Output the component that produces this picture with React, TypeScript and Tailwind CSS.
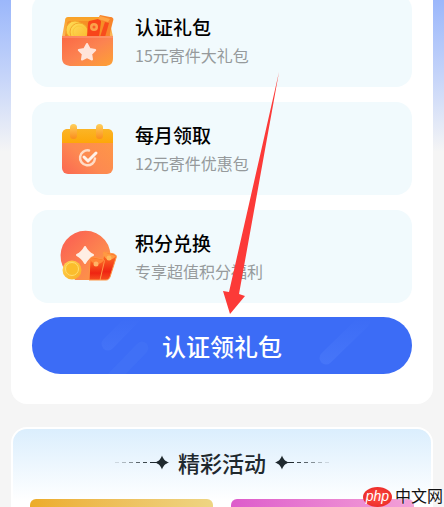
import type { ReactNode } from 'react';

function GiftBoxIcon() {
  return (
    <svg viewBox="0 -1 52 56" className="w-[52px] h-14" aria-hidden="true">
      <defs>
        <linearGradient id="boxBack" x1="0" y1="0" x2="0" y2="1">
          <stop offset="0" stopColor="#f9a126" />
          <stop offset="1" stopColor="#fbb65a" />
        </linearGradient>
        <linearGradient id="boxFront" x1="0" y1="0" x2="1" y2="1">
          <stop offset="0" stopColor="#fa6744" />
          <stop offset="0.5" stopColor="#fc8351" />
          <stop offset="1" stopColor="#fda134" />
        </linearGradient>
        <linearGradient id="coin" x1="0" y1="0" x2="1" y2="1">
          <stop offset="0" stopColor="#ffdf59" />
          <stop offset="1" stopColor="#f9b42c" />
        </linearGradient>
      </defs>
      <path d="M6 3h35c4 0 6 2 7 6l3 14H0l3-16c0-3 1-4 3-4z" fill="url(#boxBack)" />
      <path d="M3 22l2-12c0-2 1-3 3-3h35c2 0 3 1 3 3l2 12H3z" fill="#f68f25" />
      <g stroke="#f4a92c" strokeWidth="1">
        <circle cx="13" cy="16" r="9" fill="url(#coin)" />
        <circle cx="17" cy="18" r="9" fill="url(#coin)" />
        <circle cx="17" cy="18" r="6" fill="none" stroke="#fbc839" />
      </g>
      <path d="M27 7l9-2c2 0 3 1 3 3l-2 15H25l1-14z" fill="#f84519" />
      <circle cx="32" cy="13" r="4" fill="#fba24a" />
      <circle cx="32" cy="13" r="1.500" fill="#fb5928" />
      <path d="M38 1l10 2c3 0 4 2 3 4l-4 16h-9l4-15-6-3z" fill="#f8852b" />
      <path d="M43 8l4 1-4 14h-5z" fill="#f84c1c" />
      <path d="M38 2l10 3-2 3-10-3z" fill="#ffa545" />
      <path d="M0 22h51v22c0 6-3 8-9 8H10c-6 0-10-2-10-8z" fill="url(#boxFront)" />
      <path d="M0 23h51" stroke="#ffa179" strokeWidth="1" />
      <path
        d="M25 30l2.700 5 5.500 1-4 4 .8 5.500-5-2.500-5 2.500.8-5.500-4-4 5.500-1z"
        fill="#ffe4da"
        stroke="#ffe4da"
        strokeWidth="2"
        strokeLinejoin="round"
      />
    </svg>
  );
}

function CalendarIcon() {
  return (
    <svg viewBox="0 0 52 56" className="w-[52px] h-14" aria-hidden="true">
      <defs>
        <linearGradient id="calBody" x1="0" y1="1" x2="1" y2="0">
          <stop offset="0" stopColor="#fb6752" />
          <stop offset="0.4" stopColor="#fd8951" />
          <stop offset="1" stopColor="#fe9b44" />
        </linearGradient>
        <linearGradient id="calTop" x1="0" y1="0" x2="0" y2="1">
          <stop offset="0" stopColor="#fbb526" />
          <stop offset="1" stopColor="#fda709" />
        </linearGradient>
        <linearGradient id="calPin" x1="0" y1="0" x2="0" y2="1">
          <stop offset="0" stopColor="#ffd05b" />
          <stop offset="1" stopColor="#fb8d1d" />
        </linearGradient>
      </defs>
      <rect x="0" y="8" width="51" height="45" rx="6" fill="url(#calBody)" />
      <path d="M0 22v-8c0-4 2-6 6-6h39c4 0 6 2 6 6v8z" fill="url(#calTop)" />
      <rect x="8" y="3" width="7" height="15" rx="3.500" fill="url(#calPin)" />
      <rect x="34" y="3" width="7" height="15" rx="3.500" fill="url(#calPin)" />
      <path d="M27 29.500a7.500 7.500 0 1 0 6 8" fill="none" stroke="#ffdcc6" strokeWidth="2.500" strokeLinecap="round" />
      <path d="M22 36l4 4 8-8" fill="none" stroke="#fff1e7" strokeWidth="3" strokeLinecap="round" strokeLinejoin="round" />
    </svg>
  );
}

function PointsIcon() {
  return (
    <svg viewBox="0 0 56 56" className="w-14 h-14 overflow-visible" aria-hidden="true">
      <defs>
        <linearGradient id="disc" x1="0" y1="0" x2="1" y2="1">
          <stop offset="0" stopColor="#fb6f50" />
          <stop offset="0.2" stopColor="#fb6852" />
          <stop offset="0.6" stopColor="#fd864f" />
          <stop offset="1" stopColor="#fda03e" />
        </linearGradient>
        <linearGradient id="packet" x1="0" y1="0" x2="0" y2="1">
          <stop offset="0" stopColor="#ff7b2a" />
          <stop offset="0.7" stopColor="#ef2412" />
          <stop offset="1" stopColor="#f6501f" />
        </linearGradient>
        <linearGradient id="gold" x1="0" y1="0" x2="1" y2="1">
          <stop offset="0" stopColor="#ffd451" />
          <stop offset="1" stopColor="#f9ad24" />
        </linearGradient>
      </defs>
      <path d="M12 49a25 25 0 1 1 23 0l-1 2H13z" fill="url(#disc)" />
      <path
        d="M23 18c2 4 4 6 8 8-4 2-6 4-8 8-2-4-4-6-8-8 4-2 6-4 8-8z"
        fill="#ffeee4"
        stroke="#ffeee4"
        strokeWidth="2"
        strokeLinejoin="round"
      />
      <path d="M42 23l10 2c2 1 3 2 2 4l-6 19c-1 2-2 3-4 3h-6z" fill="url(#packet)" stroke="#ff9646" strokeWidth="1" />
      <path d="M41 23l13 4c-4 5-9 5-12 0z" fill="#ff9a43" />
      <path d="M31 28l9 2c2 0 3 2 2 4l-4 17H27l1-20c0-2 1-3 3-3z" fill="url(#packet)" stroke="#ff9646" strokeWidth="1" />
      <path d="M29 29l13 2c-3 5-10 5-13 1z" fill="#ff8638" />
      <circle cx="34" cy="35" r="2.500" fill="#ffb366" />
      <circle cx="47" cy="29" r="2.500" fill="#ffb95c" />
      <circle cx="10" cy="41" r="9.500" fill="url(#gold)" />
      <circle cx="10" cy="40" r="6.500" fill="#fbbd2c" stroke="#ffdd6d" strokeWidth="1" />
    </svg>
  );
}

const benefits: { title: string; desc: string; icon: ReactNode }[] = [
  { title: '认证礼包', desc: '15元寄件大礼包', icon: <GiftBoxIcon /> },
  { title: '每月领取', desc: '12元寄件优惠包', icon: <CalendarIcon /> },
  { title: '积分兑换', desc: '专享超值积分福利', icon: <PointsIcon /> },
];

function Sparkle({ flip = false }: { flip?: boolean }) {
  return (
    <svg viewBox="0 0 56 16" className={`w-14 h-4 ${flip ? '-scale-x-100' : ''}`} aria-hidden="true">
      <g fill="#1f292e">
        <rect x="1" y="8" width="4" height="1" opacity="0.150" />
        <rect x="8" y="8" width="4" height="1" opacity="0.300" />
        <rect x="15" y="8" width="4" height="1" opacity="0.500" />
        <rect x="22" y="8" width="4" height="1" opacity="0.700" />
        <rect x="29" y="8" width="4" height="1" opacity="0.850" />
        <rect x="36" y="8" width="8" height="1" />
        <path d="M48 1.500c1.500 4 3 5.500 7 7-4 1.500-5.500 3-7 7-1.500-4-3-5.500-7-7 4-1.500 5.500-3 7-7z" />
      </g>
    </svg>
  );
}

export default function App() {
  return (
    <div className="relative h-screen overflow-hidden flex flex-col gap-[23px] px-[11px] bg-[#f5f5f5] font-['Noto_Sans_CJK_SC',sans-serif]">
      <div className="absolute inset-x-0 top-0 h-[152px] bg-linear-to-b from-[#9bb7fb] via-[#c5d4f9] to-[#f5f5f5]" />

      {/* Benefits */}
      <section className="relative shrink-0 -mt-5 pt-[14px] px-[21px] pb-[30px] bg-white rounded-2xl">
        <ul className="space-y-[15px]">
          {benefits.map(({ title, desc, icon }) => (
            <li key={title} className="flex items-center h-[93px] pl-[30px] bg-[#f1fafd] rounded-2xl">
              <div className="w-[73px] shrink-0">{icon}</div>
              <div>
                <h3 className="text-[19px] leading-7 font-medium text-black">{title}</h3>
                <p className="text-base leading-7 text-[#969a9c]">{desc}</p>
              </div>
            </li>
          ))}
        </ul>
        <button
          type="button"
          className="relative mt-[14px] w-full h-[57px] rounded-full overflow-hidden bg-[#3c6cf6] text-2xl font-medium text-white"
        >
          <svg viewBox="0 0 380 57" className="absolute inset-0 w-full h-full" fill="none" strokeWidth="13" strokeLinecap="round" aria-hidden="true">
            <defs>
              <linearGradient id="streak" gradientUnits="userSpaceOnUse" x1="0" y1="0" x2="0" y2="45">
                <stop offset="0" stopColor="#5c8aff" stopOpacity="0" />
                <stop offset="1" stopColor="#5c8aff" stopOpacity="0.300" />
              </linearGradient>
            </defs>
            <path d="M76 27L110 -8M294 41L332 4" stroke="url(#streak)" />
            <path d="M110 31L80 62" stroke="#5180fc" strokeOpacity="0.200" />
          </svg>
          <span className="relative">认证领礼包</span>
        </button>
      </section>

      {/* Activities */}
      <section className="relative flex-1 flex flex-col rounded-t-2xl border-2 border-b-0 border-white bg-white bg-linear-to-b from-[#dbeefd] to-white to-[72px] px-[17px]">
        <div className="flex items-center justify-center gap-2 h-[70px] pb-1 shrink-0">
          <Sparkle />
          <h2 className="text-[22px] leading-8 font-medium text-[#1f292e]">精彩活动</h2>
          <Sparkle flip />
        </div>
        <div className="flex-1 grid grid-cols-2 gap-[18px]">
          <div className="rounded-t-md bg-linear-to-r from-[#ecac28] to-[#eed583]" />
          <div className="rounded-t-md bg-linear-to-r from-[#dd5bcb] to-[#f3a1d7]" />
        </div>
      </section>

      {/* Pointer to the claim button */}
      <svg viewBox="0 0 58 244" className="absolute left-1/2 top-[71px] w-[58px] h-[244px] pointer-events-none" aria-hidden="true">
        <path d="M57 1L17 223l6 2L8 243 1 220l6 1z" fill="#fc3a38" />
      </svg>

      {/* Site mark */}
      <div className="absolute right-px bottom-0 flex items-end gap-[3px] h-6">
        <span className="w-[29px] h-5 rounded-[50%] bg-radial from-[#ff4c40] to-[#e51d22] flex items-center justify-center pb-0.5 font-['Liberation_Sans',sans-serif] italic text-sm leading-4 text-white">
          php
        </span>
        <span className="text-base leading-6 text-[#111111] text-shadow-[0_0_2px_white]">中文网</span>
      </div>
    </div>
  );
}
